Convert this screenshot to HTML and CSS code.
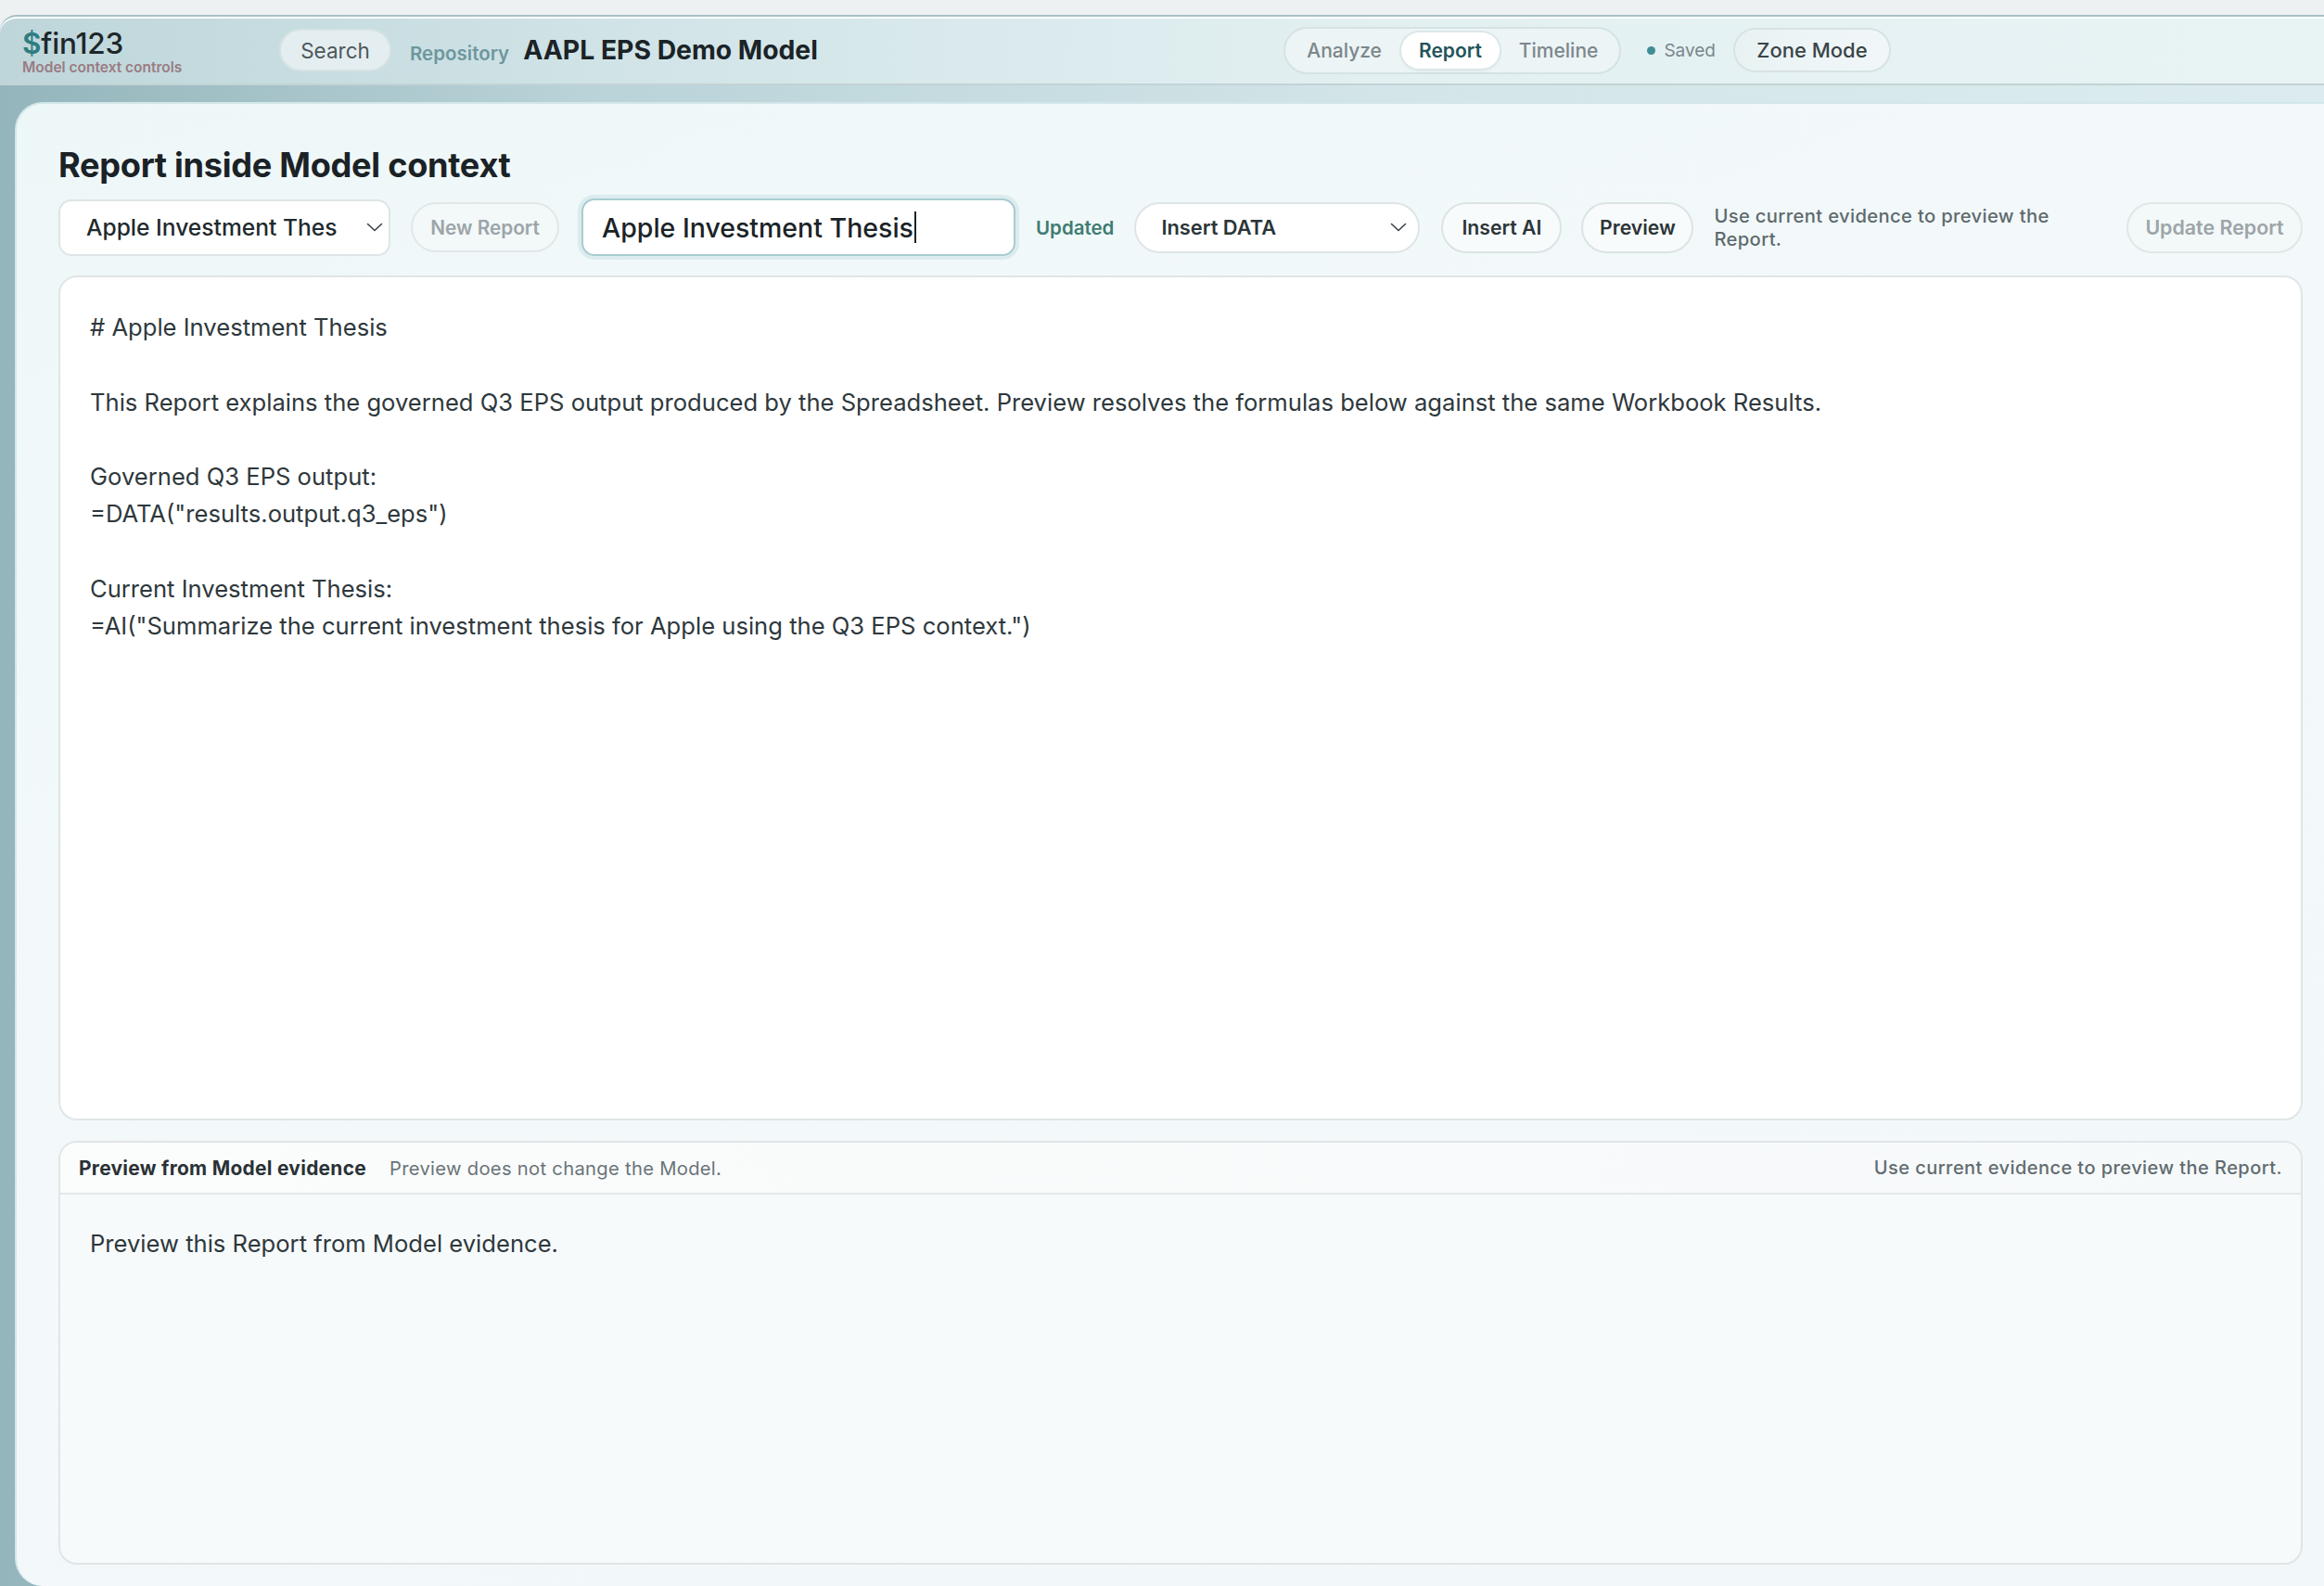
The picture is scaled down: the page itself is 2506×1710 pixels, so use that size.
FILE: index.html
```html
<!DOCTYPE html>
<html lang="en">
<head>
<meta charset="utf-8">
<title>$fin123 – Report</title>
<link rel="stylesheet" href="styles.css">
</head>
<body>
<div class="app">
  <header class="topbar">
    <div class="brand">
      <div class="brand-name"><span class="dollar">$</span>fin123</div>
      <div class="brand-sub">Model context controls</div>
    </div>
    <button class="search-btn">Search</button>
    <span class="repo-label">Repository</span>
    <span class="repo-name">AAPL EPS Demo Model</span>
    <nav class="segmented">
      <span class="seg-item">Analyze</span>
      <span class="seg-item active">Report</span>
      <span class="seg-item">Timeline</span>
    </nav>
    <span class="saved"><span class="saved-dot"></span>Saved</span>
    <button class="zone-btn">Zone Mode</button>
  </header>

  <div class="stage">
    <main class="panel">
      <h1 class="title">Report inside Model context</h1>

      <div class="toolbar">
        <div class="select report-select">
          <span>Apple Investment Thes</span>
          <svg class="chev" width="18" height="10" viewBox="0 0 18 10"><path d="M1.5 1.5 L9 8.5 L16.5 1.5" fill="none" stroke="#3a4347" stroke-width="1.6" stroke-linecap="round" stroke-linejoin="round"/></svg>
        </div>
        <button class="pill muted new-report">New Report</button>
        <div class="name-field"><span>Apple Investment Thesis</span><span class="caret"></span></div>
        <span class="updated">Updated</span>
        <div class="select insert-data">
          <span>Insert DATA</span>
          <svg class="chev" width="18" height="10" viewBox="0 0 18 10"><path d="M1.5 1.5 L9 8.5 L16.5 1.5" fill="none" stroke="#3a4347" stroke-width="1.6" stroke-linecap="round" stroke-linejoin="round"/></svg>
        </div>
        <button class="pill insert-ai">Insert AI</button>
        <button class="pill preview-btn">Preview</button>
        <p class="helper">Use current evidence to preview the Report.</p>
        <button class="pill muted update-report">Update Report</button>
      </div>

      <section class="editor">
<div class="editor-text"># Apple Investment Thesis

This Report explains the governed Q3 EPS output produced by the Spreadsheet. Preview resolves the formulas below against the same Workbook Results.

Governed Q3 EPS output:
=DATA("results.output.q3_eps")

Current Investment Thesis:
=AI("Summarize the current investment thesis for Apple using the Q3 EPS context.")</div>
      </section>

      <section class="preview">
        <div class="preview-head">
          <span class="preview-title">Preview from Model evidence</span>
          <span class="preview-note">Preview does not change the Model.</span>
          <span class="preview-hint">Use current evidence to preview the Report.</span>
        </div>
        <div class="preview-body">Preview this Report from Model evidence.</div>
      </section>
    </main>
  </div>
</div>
</body>
</html>
```

FILE: styles.css
```css
* { box-sizing: border-box; }

html, body {
  margin: 0;
  padding: 0;
}

body {
  width: 2506px;
  height: 1710px;
  overflow: hidden;
  background: #eef1f1;
  font-family: Inter, "Noto Sans", "Liberation Sans", sans-serif;
  color: #1f282c;
}

button {
  font-family: inherit;
  cursor: pointer;
}

.app {
  padding-top: 16px;
  height: 1710px;
  display: flex;
  flex-direction: column;
}

/* ---------- Top bar ---------- */
.topbar {
  height: 76px;
  flex: none;
  display: flex;
  align-items: center;
  padding: 0 467px 0 24px;
  border-top: 2px solid #a6c2c6;
  border-bottom: 2px solid #c3d3d5;
  border-top-left-radius: 18px;
  box-shadow: inset 0 2px 0 #ffffff;
  background: linear-gradient(90deg, #bed6da 0%, #d3e5e8 30%, #e3f0f2 60%, #e8f3f4 100%);
}

.brand {
  display: flex;
  flex-direction: column;
  width: 177px;
  margin-top: 6px;
}

.brand-name {
  font-size: 31.5px;
  font-weight: 500;
  line-height: 32px;
  color: #1e272b;
  letter-spacing: -0.2px;
}

.dollar {
  color: #2f7d82;
  font-weight: 600;
}

.brand-sub {
  font-size: 15.5px;
  font-weight: 600;
  line-height: 20px;
  color: #9a7b82;
  white-space: nowrap;
}

.search-btn {
  margin-left: 100px;
  width: 121px;
  height: 46px;
  border-radius: 23px;
  border: 2px solid #d6e2e4;
  background: #e4eef0;
  font-size: 22.5px;
  color: #4d575b;
}

.repo-label {
  margin-left: 20px;
  font-size: 20.5px;
  font-weight: 600;
  color: #6d979d;
  padding-top: 6px;
}

.repo-name {
  margin-left: 15px;
  font-size: 28.3px;
  font-weight: 700;
  color: #1b2327;
}

.segmented {
  margin-left: auto;
  display: flex;
  align-items: center;
  gap: 2px;
  height: 51px;
  padding: 0 4px;
  border-radius: 26px;
  border: 2px solid #d5e2e4;
  background: #ecf4f5;
}

.seg-item {
  height: 39px;
  line-height: 39px;
  padding: 0 19px;
  border-radius: 20px;
  font-size: 21px;
  font-weight: 500;
  color: #7c878b;
}

.seg-item.active {
  background: #ffffff;
  color: #24545a;
  font-weight: 600;
  box-shadow: 0 0 0 2px #dbe7e9, 0 2px 4px rgba(40, 80, 90, 0.08);
}

.saved {
  margin-left: 28px;
  display: flex;
  align-items: center;
  gap: 9px;
  font-size: 19px;
  color: #7a878b;
}

.saved-dot {
  width: 9px;
  height: 9px;
  border-radius: 50%;
  background: #3f8c94;
}

.zone-btn {
  margin-left: 19px;
  width: 170px;
  height: 48px;
  border-radius: 24px;
  border: 2px solid #d6e2e4;
  background: linear-gradient(90deg, #e9f2f3, #f1f7f8);
  font-size: 22px;
  font-weight: 500;
  color: #3a4448;
}

/* ---------- Stage / panel ---------- */
.stage {
  flex: 1;
  display: flex;
  padding: 18px 0 0 16px;
  background: linear-gradient(90deg, #93b5bb 0%, #b9d3d8 25%, #d3e5e8 60%, #dcecee 100%);
}

.panel {
  flex: 1;
  display: flex;
  flex-direction: column;
  padding: 44px 23px 0 45px;
  border-top: 2px solid #d2e6e9;
  border-left: 2px solid #d2e6e9;
  border-radius: 30px 0 0 30px;
  background: linear-gradient(160deg, #eef7f8 0%, #f3f9fa 40%, #f2f8f9 100%);
}

.title {
  margin: 0;
  font-size: 36.2px;
  line-height: 44px;
  font-weight: 700;
  color: #1b2226;
  letter-spacing: -0.3px;
}

/* ---------- Toolbar ---------- */
.toolbar {
  margin-top: 14px;
  display: flex;
  align-items: center;
  height: 62px;
}

.select {
  display: flex;
  align-items: center;
  justify-content: space-between;
  background: #ffffff;
  border: 2px solid #dfe5e6;
  color: #1f2a2e;
}

.report-select {
  width: 358px;
  height: 61px;
  border-radius: 14px;
  padding: 0 6px 0 28px;
  font-size: 24.6px;
  font-weight: 500;
}

.pill {
  height: 55px;
  border-radius: 28px;
  border: 2px solid #dde3e5;
  background: #f8fbfb;
  font-size: 21px;
  font-weight: 600;
  color: #2b3538;
  padding: 0;
}

.pill.muted {
  color: #9ca5a8;
  background: #f3f8f9;
  border-color: #e0e7e8;
}

.new-report {
  margin-left: 22px;
  width: 160px;
  height: 54px;
  font-size: 20.8px;
}

.name-field {
  margin-left: 24px;
  width: 468px;
  height: 62px;
  display: flex;
  align-items: center;
  padding-left: 20px;
  border-radius: 14px;
  border: 2px solid #a9ccd1;
  background: #ffffff;
  box-shadow: 0 0 0 4px #dcebed;
  font-size: 28.5px;
  font-weight: 500;
  color: #1b2327;
}

.caret {
  display: inline-block;
  width: 2px;
  height: 34px;
  margin-left: 1px;
  background: #1b2327;
}

.updated {
  margin-left: 22px;
  font-size: 20.5px;
  font-weight: 600;
  color: #3f7c73;
}

.insert-data {
  margin-left: 22px;
  width: 308px;
  height: 55px;
  border-radius: 28px;
  padding: 0 12px 0 27px;
  font-size: 21.8px;
  font-weight: 600;
  color: #2a3538;
}

.insert-ai {
  margin-left: 23px;
  width: 130px;
  font-size: 21.2px;
}

.preview-btn {
  margin-left: 21px;
  width: 121px;
  font-size: 21.2px;
}

.helper {
  margin: 0 0 0 22px;
  width: 400px;
  font-size: 20.2px;
  line-height: 25px;
  font-weight: 500;
  color: #5e6a6e;
  letter-spacing: 0.35px;
}

.update-report {
  margin-left: auto;
  width: 190px;
  font-size: 21.4px;
}

/* ---------- Editor ---------- */
.editor {
  margin-top: 21px;
  height: 911px;
  flex: none;
  border: 2px solid #e0e6e7;
  border-radius: 20px;
  background: #ffffff;
  padding: 34px 32px;
}

.editor-text {
  white-space: pre-wrap;
  font-size: 25.6px;
  line-height: 40.3px;
  color: #2e383c;
}

/* ---------- Preview ---------- */
.preview {
  margin-top: 22px;
  height: 457px;
  flex: none;
  display: flex;
  flex-direction: column;
  border: 2px solid #e0e6e7;
  border-radius: 20px;
  background: #f7fafb;
  overflow: hidden;
}

.preview-head {
  height: 56px;
  flex: none;
  display: flex;
  align-items: center;
  padding: 0 20px;
  border-bottom: 2px solid #e4e9ea;
  background: linear-gradient(90deg, #fbfcfc, #f6f9fa);
}

.preview-title {
  font-size: 20.9px;
  font-weight: 700;
  color: #2a3236;
  letter-spacing: 0.3px;
}

.preview-note {
  margin-left: 25px;
  font-size: 20.2px;
  color: #6a7478;
  letter-spacing: 0.3px;
}

.preview-hint {
  margin-left: auto;
  font-size: 20px;
  font-weight: 500;
  color: #616c70;
  letter-spacing: 0.45px;
}

.preview-body {
  padding: 33px 32px;
  font-size: 25.6px;
  line-height: 40px;
  color: #2e383c;
}
```
